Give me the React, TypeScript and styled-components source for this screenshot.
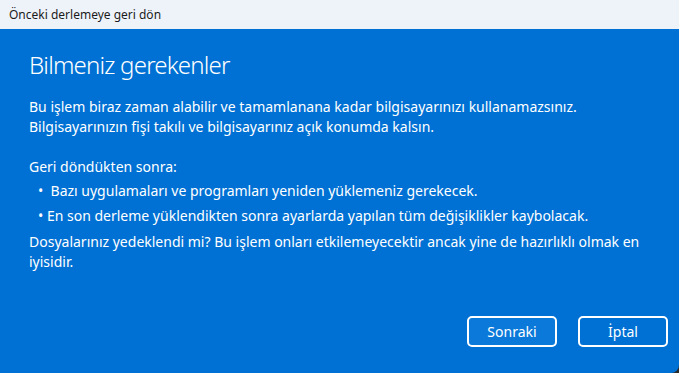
import React from "react";
import styled, { createGlobalStyle } from "styled-components";

const GlobalStyle = createGlobalStyle`
  html, body {
    margin: 0;
    padding: 0;
    background: #2b2b2b;
  }
  body {
    font-family: "Noto Sans", "Open Sans", sans-serif;
  }
`;

const Window = styled.div`
  width: 679px;
  height: 373px;
  display: flex;
  flex-direction: column;
  overflow: hidden;
  border-bottom-right-radius: 8px;
  background-color: #0071d4;
`;

const TitleBar = styled.div`
  height: 29px;
  flex-shrink: 0;
  display: flex;
  align-items: center;
  padding-left: 9px;
  background-color: #eef3fa;
  color: #1b1b1b;
  font-size: 12px;
`;

const Content = styled.div`
  flex: 1;
  display: flex;
  flex-direction: column;
  padding: 20px 11px 26px 29px;
  color: #ffffff;
`;

const Heading = styled.h1`
  margin: 0 0 16px;
  font-size: 24px;
  font-weight: 300;
  line-height: 32px;
  letter-spacing: -0.8px;
`;

const Paragraph = styled.p`
  margin: 0 0 20px;
  font-size: 14px;
  line-height: 20px;
`;

const Intro = styled(Paragraph)`
  margin-bottom: 0;
`;

const BulletList = styled.ul`
  list-style: none;
  margin: 4px 0 1px 9px;
  padding: 0;
`;

const Bullet = styled.li`
  font-size: 14px;
  line-height: 20px;
  margin-bottom: 5px;
  white-space: pre;
`;

const Footer = styled.div`
  margin-top: auto;
  display: flex;
  justify-content: flex-end;
  gap: 21px;
`;

const Button = styled.button<{ $primary?: boolean }>`
  width: 90px;
  height: 31px;
  box-sizing: border-box;
  border: 2px solid #ffffff;
  border-radius: 5px;
  background-color: ${(p) => (p.$primary ? "#0a79d9" : "#0071d4")};
  color: #ffffff;
  font-family: inherit;
  font-size: 14px;
  cursor: pointer;
`;

export default function App() {
  return (
    <>
      <GlobalStyle />
      <Window>
        <TitleBar>Önceki derlemeye geri dön</TitleBar>
        <Content>
          <Heading>Bilmeniz gerekenler</Heading>
          <Paragraph>
            Bu işlem biraz zaman alabilir ve tamamlanana kadar bilgisayarınızı kullanamazsınız.
            <br />
            Bilgisayarınızın fişi takılı ve bilgisayarınız açık konumda kalsın.
          </Paragraph>
          <Intro>Geri döndükten sonra:</Intro>
          <BulletList>
            <Bullet>{"•  Bazı uygulamaları ve programları yeniden yüklemeniz gerekecek."}</Bullet>
            <Bullet>{"• En son derleme yüklendikten sonra ayarlarda yapılan tüm değişiklikler kaybolacak."}</Bullet>
          </BulletList>
          <Intro>
            Dosyalarınız yedeklendi mi? Bu işlem onları etkilemeyecektir ancak yine de hazırlıklı olmak en
            <br />
            iyisidir.
          </Intro>
          <Footer>
            <Button $primary>Sonraki</Button>
            <Button>İptal</Button>
          </Footer>
        </Content>
      </Window>
    </>
  );
}
